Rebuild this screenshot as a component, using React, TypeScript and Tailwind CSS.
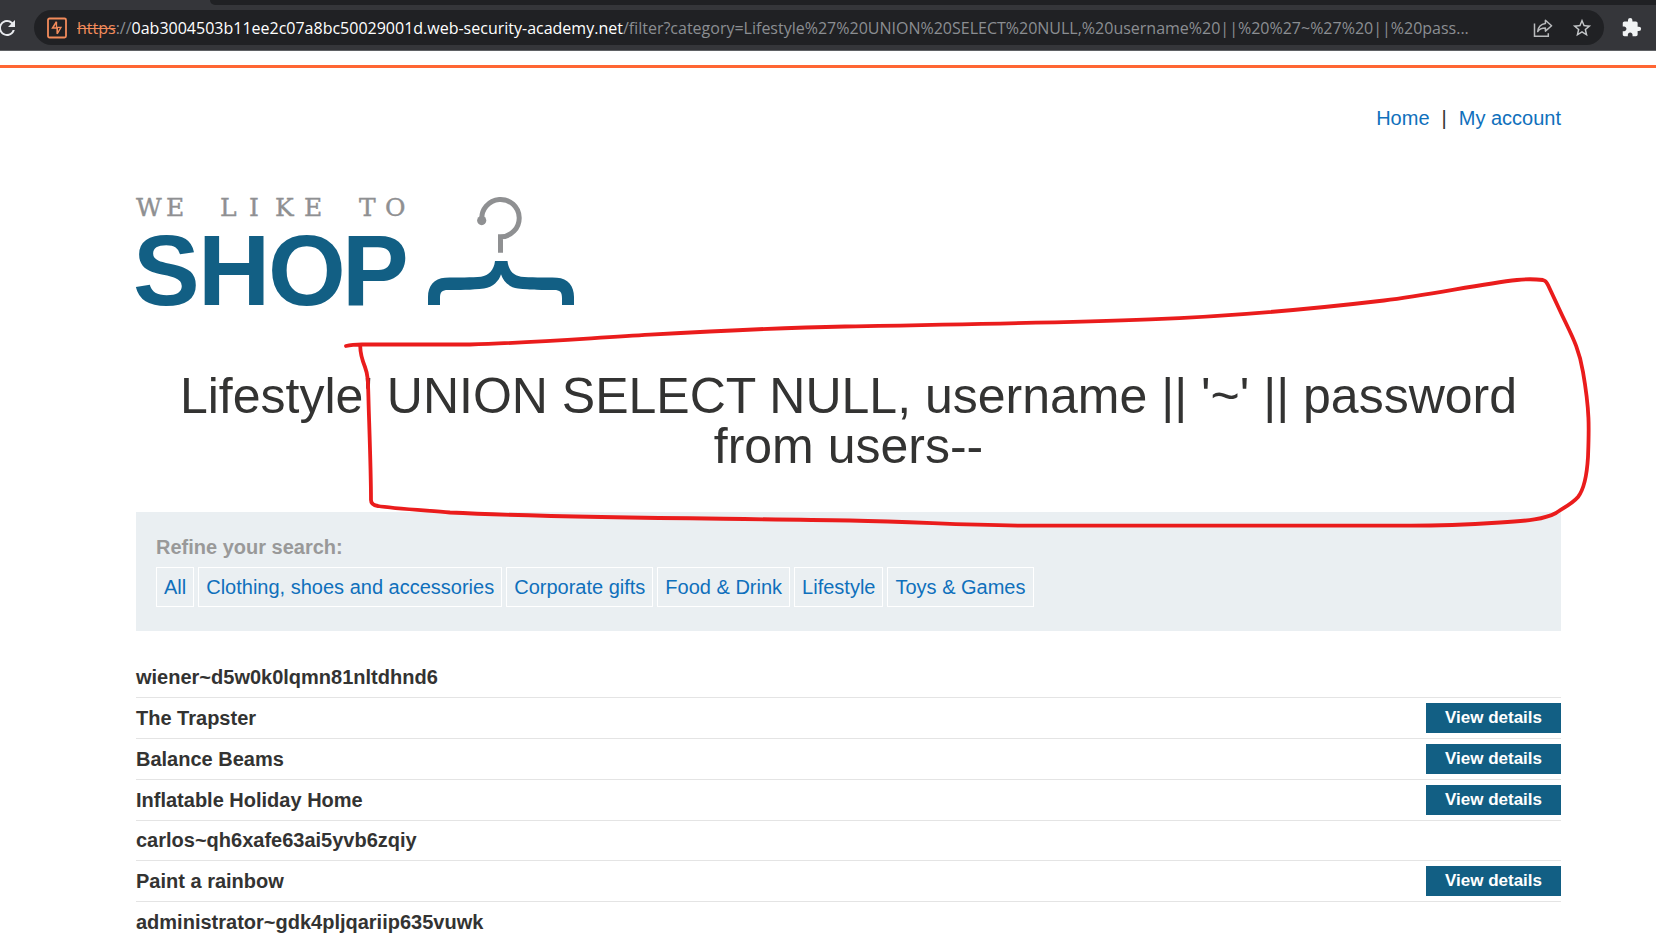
import React from "react";
import { MdRefresh, MdStarBorder, MdExtension } from "react-icons/md";

const categories = [
  "All",
  "Clothing, shoes and accessories",
  "Corporate gifts",
  "Food & Drink",
  "Lifestyle",
  "Toys & Games",
];

const products = [
  { name: "wiener~d5w0k0lqmn81nltdhnd6", details: false },
  { name: "The Trapster", details: true },
  { name: "Balance Beams", details: true },
  { name: "Inflatable Holiday Home", details: true },
  { name: "carlos~qh6xafe63ai5yvb6zqiy", details: false },
  { name: "Paint a rainbow", details: true },
  { name: "administrator~gdk4pljqariip635vuwk", details: false },
];

function BurpIcon() {
  return (
    <svg viewBox="0 0 20 22" className="h-[22px] w-5 shrink-0" fill="none" stroke="#f28b5b" aria-hidden="true">
      <rect x="1" y="1.500" width="18" height="19" rx="1.500" strokeWidth="1.800" />
      <path d="M9.500 4.800L5.600 11H10.200V16.800" strokeWidth="1.600" />
      <path d="M10.200 16.800L14 10.300H9.500V4.800" strokeWidth="1.300" />
    </svg>
  );
}

function ShareIcon() {
  return (
    <svg viewBox="0 0 20 20" className="h-5 w-5" fill="none" stroke="#b9bbbd" strokeWidth="1.500" aria-hidden="true">
      <path d="M1.500 5.500V18.200H15.300V15.200" />
      <path d="M12.400 2.300L18.600 7.700L12.400 13.100V9.900C8.800 9.900 6.400 10.700 4.700 13.500C5.200 9.200 7.700 6.300 12.400 5.600Z" strokeLinejoin="round" />
    </svg>
  );
}

function BrowserBar() {
  return (
    <header className="border-b border-[#5f6164] bg-[#35363a]">
      <div className="ml-[210px] h-[5px] rounded-bl-lg bg-[#202124]" />
      <div className="flex h-[45px] items-center pr-[14px]">
        <button aria-label="Reload" className="-ml-[5px] mr-[15px] shrink-0 text-[#e8eaed]">
          <MdRefresh className="h-6 w-6" />
        </button>
        <div className="flex h-[35px] min-w-0 flex-1 items-center rounded-full bg-[#202124] pl-[13px] pr-[11px]">
          <BurpIcon />
          <div
            role="textbox"
            aria-label="Address"
            className="ml-[10px] min-w-0 flex-1 truncate font-['Open_Sans','Noto_Sans',sans-serif] text-[16px] leading-6 text-[#8b8e92]"
          >
            <span className="text-[#f28b5b] line-through">https</span>
            <span>://</span>
            <span className="text-white">0ab3004503b11ee2c07a8bc50029001d.web-security-academy.net</span>
            <span>/filter?category=Lifestyle%27%20UNION%20SELECT%20NULL,%20username%20||%20%27~%27%20||%20pass...</span>
          </div>
          <div className="ml-4 flex items-center gap-[18px]">
            <button aria-label="Share this page">
              <ShareIcon />
            </button>
            <button aria-label="Bookmark this tab" className="text-[#c4c7c9]">
              <MdStarBorder className="h-[22px] w-[22px]" />
            </button>
          </div>
        </div>
        <button aria-label="Extensions" className="ml-[17px] shrink-0 text-[#f1f3f4]">
          <MdExtension className="h-[21px] w-[21px]" />
        </button>
      </div>
    </header>
  );
}

function ShopLogo() {
  return (
    <svg viewBox="126 190 460 140" className="-ml-[10px] block h-[140px] w-[460px]" role="img" aria-label="We like to shop">
      <text
        x="136 166 190 220 249 275 304 330 359 385"
        y="216"
        className="fill-[#8f9092] stroke-[#8f9092] font-['DejaVu_Serif',serif] text-[25px]"
        strokeWidth="0.400"
      >
        WE LIKE TO
      </text>
      <text
        x="133 198 268 342"
        y="305"
        className="fill-[#125f84] font-['Liberation_Sans',Arial,sans-serif] text-[100px] font-bold"
      >
        SHOP
      </text>
      <circle cx="481.700" cy="220.600" r="4.600" fill="#8f9092" />
      <path d="M481.900 220A18.700 18.700 0 1 1 500.500 236.800V252.700" fill="none" stroke="#8f9092" strokeWidth="5" />
      <path
        fill="#125f84"
        d="M495 261H507.500C508.500 270 513 275.500 521 276.700C529 277.800 545 277 557 277.700C568 278.500 574 286 574 297V305H562V298C562 292 560 290 554 290C544 290 530 290 518 288.500C509 287.300 503 281 501 274.300C499 281 493 287.300 484 288.500C472 290 458 290 448 290C442 290 440 292 440 298V305H428V297C428 286 434 278.500 445 277.700C457 277 473 277.800 481 276.700C489 275.500 494 270 495 261Z"
      />
    </svg>
  );
}

function Annotation() {
  return (
    <svg viewBox="340 270 1256 264" className="pointer-events-none absolute left-[340px] top-[219px] h-[264px] w-[1256px]" aria-hidden="true">
      <path
        fill="none"
        stroke="#ea1c1c"
        strokeWidth="3.800"
        strokeLinecap="round"
        strokeLinejoin="round"
        d="M346 346Q352 344.500 362 344.500H470C530 343 590 338 650 334.700C740 329.500 790 327.500 845 326.500C960 324.500 1050 323 1150 319.300C1240 316 1320 308 1384 300.500C1430 295 1480 284 1517 280Q1530 278.500 1543 280Q1546 280.500 1548 285L1562 315C1572 336 1579 348 1583 372C1590 412 1589 430 1588 457C1587 474 1585 488 1578 497C1572 504 1563 508 1556 513C1545 519 1528 521 1500 522.500C1460 525 1430 525.700 1411 525.700H1040C960 525.700 930 522 850 520.500C700 518 560 518 450 512.500C420 510 390 508 378 506Q371 505 371 500C371 470 369 420 368.500 400C368 380 368 375 365 367Q360 354 360.300 346"
      />
    </svg>
  );
}

export default function App() {
  return (
    <div className="min-h-screen bg-white font-['Liberation_Sans',Arial,sans-serif] text-[20px] leading-6 text-[#333332]">
      <BrowserBar />
      <main className="relative pt-[14px]">
        <div className="h-[3px] bg-[#ff6633]" />
        <div className="pl-[136px] pr-[95px] pt-[38px]">
          <nav className="flex justify-end gap-3">
            <a href="#home" className="text-[#0f70bc]">Home</a>
            <span>|</span>
            <a href="#account" className="text-[#0f70bc]">My account</a>
          </nav>

          <div className="mt-[60px]">
            <ShopLogo />
          </div>

          <h1 className="mt-[41px] text-center text-[50px] leading-[50px]">
            Lifestyle' UNION SELECT NULL, username || '~' || password from users--
          </h1>

          <section className="mt-[41px] bg-[#eaeff2] px-5 pb-6 pt-[23px]">
            <h2 className="font-bold text-[#999999]">Refine your search:</h2>
            <div className="mt-2 flex flex-wrap gap-1">
              {categories.map((name) => (
                <a
                  key={name}
                  href="#filter"
                  className="flex h-10 items-center border border-white px-[7px] text-[#0f70bc]"
                >
                  {name}
                </a>
              ))}
            </div>
          </section>

          <table className="mt-[27px] w-full border-separate border-spacing-0">
            <tbody>
              {products.map((product) => (
                <tr key={product.name} className="group">
                  <th
                    scope="row"
                    className="h-10 border-b border-[#e4e4e4] p-0 pb-px text-left font-bold group-last:border-b-0"
                  >
                    {product.name}
                  </th>
                  <td className="border-b border-[#e4e4e4] p-0 text-right group-last:border-b-0">
                    {product.details && (
                      <a
                        href="#details"
                        className="my-[5px] ml-auto flex h-[30px] w-[135px] items-center justify-center bg-[#125f84] text-[17px] font-bold text-white"
                      >
                        View details
                      </a>
                    )}
                  </td>
                </tr>
              ))}
            </tbody>
          </table>
        </div>
        <Annotation />
      </main>
    </div>
  );
}
